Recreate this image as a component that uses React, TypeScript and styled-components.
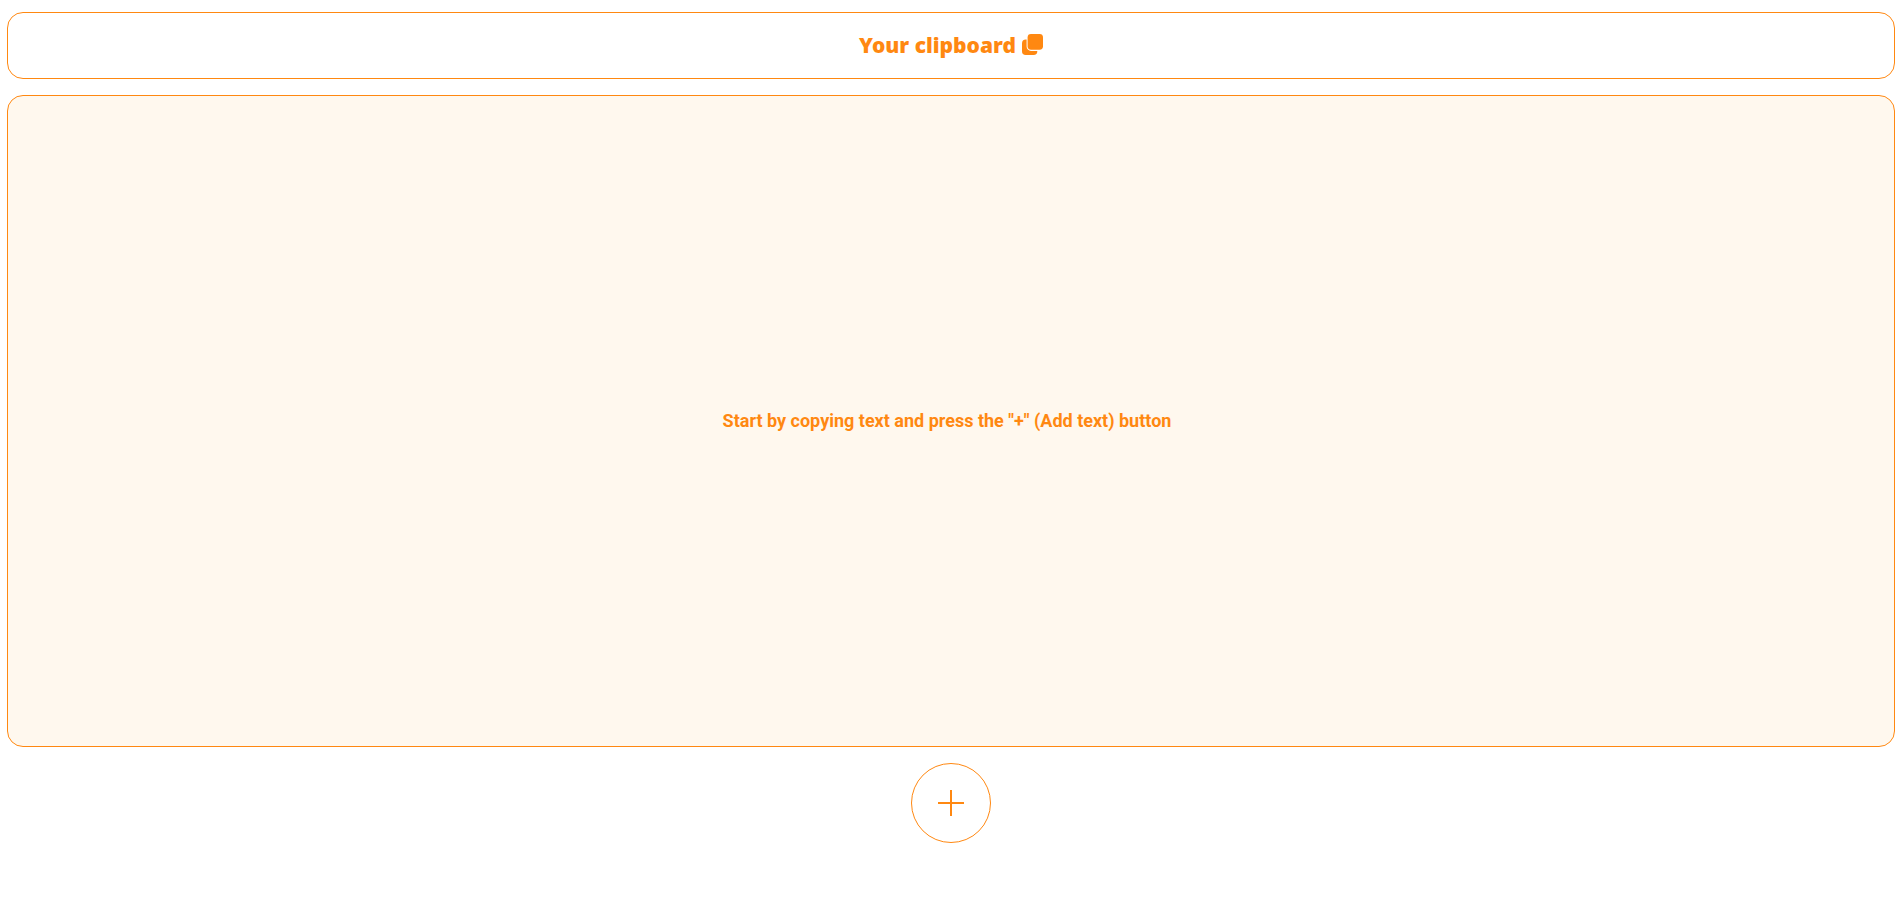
import React from "react";
import styled, { createGlobalStyle } from "styled-components";

const orange = "#ff8811";

const GlobalStyle = createGlobalStyle`
  * {
    box-sizing: border-box;
  }

  body {
    margin: 0;
    background: #ffffff;
    color: ${orange};
    font-family: Roboto, "Liberation Sans", sans-serif;
  }
`;

const Page = styled.div`
  display: flex;
  flex-direction: column;
  align-items: center;
  gap: 16px;
  min-height: 100vh;
  padding: 12px 8px 12px 7px;
`;

const Header = styled.header`
  display: flex;
  align-items: center;
  justify-content: center;
  gap: 6px;
  align-self: stretch;
  padding: 16px;
  border: 1px solid ${orange};
  border-radius: 16px;
`;

const Title = styled.h1`
  margin: 0;
  font-family: "Noto Sans", "Open Sans", sans-serif;
  font-size: 21px;
  font-weight: 900;
  line-height: 33px;
`;

const CopyIcon = styled.svg`
  display: block;
  margin-bottom: 2px;
`;

const Board = styled.main`
  display: flex;
  align-items: center;
  justify-content: center;
  align-self: stretch;
  min-height: calc(71vh - 1px);
  padding: 16px 24px 16px 16px;
  border: 1px solid ${orange};
  border-radius: 16px;
  background: #fff8ee;
`;

const Hint = styled.p`
  margin: 0;
  font-size: 18px;
  font-weight: 700;
  line-height: 28px;
`;

const AddButton = styled.button`
  display: flex;
  align-items: center;
  justify-content: center;
  width: 80px;
  height: 80px;
  padding: 0;
  border: 1px solid ${orange};
  border-radius: 50%;
  background: #ffffff;
  color: ${orange};
  cursor: pointer;
`;

export default function App() {
  return (
    <>
      <GlobalStyle />
      <Page>
        <Header>
          <Title>Your clipboard</Title>
          <CopyIcon width="21" height="22" viewBox="0 0 21 22" fill={orange} aria-hidden="true">
            <path d="M4.6 5.600V12.500A4.400 4.400 0 0 0 9 16.900H15.300V17.200A3.800 3.800 0 0 1 11.500 21H3.800A3.800 3.800 0 0 1 0 17.200V9.400A3.800 3.800 0 0 1 3.800 5.600Z" />
            <rect x="5.600" y="0.100" width="15.400" height="15.600" rx="3.400" />
          </CopyIcon>
        </Header>
        <Board>
          <Hint>Start by copying text and press the "+" (Add text) button</Hint>
        </Board>
        <AddButton type="button" aria-label="Add text">
          <svg width="26" height="26" viewBox="0 0 26 26" stroke={orange} strokeWidth="2" fill="none" aria-hidden="true">
            <path d="M13 0V26M0 13H26" />
          </svg>
        </AddButton>
      </Page>
    </>
  );
}
